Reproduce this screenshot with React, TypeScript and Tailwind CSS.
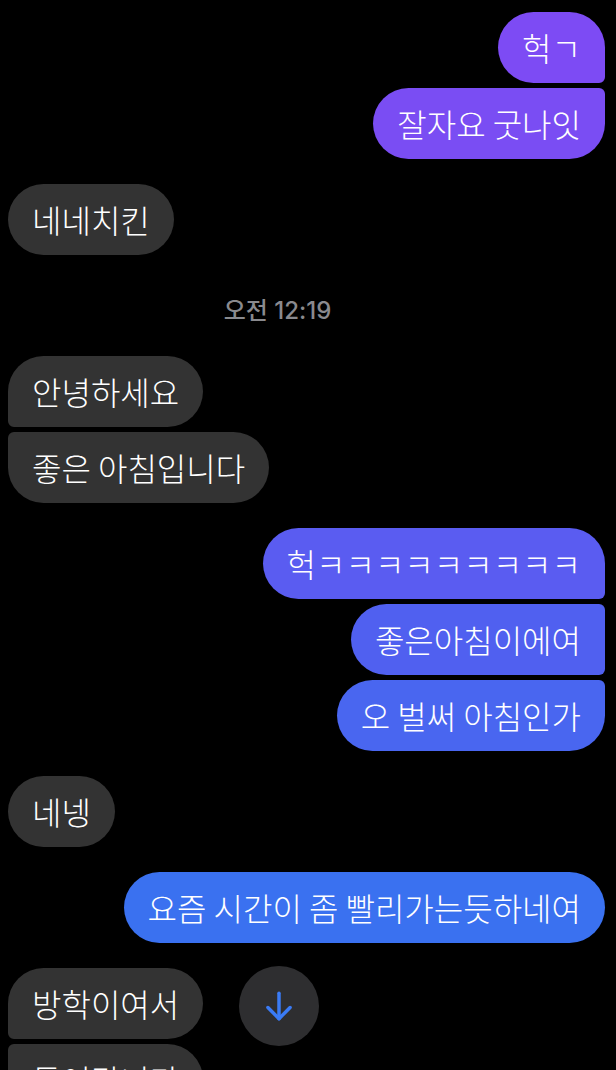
import React from 'react';

type Msg = {
    text: string;
    mine: boolean;
    shape: string;
    color?: string;
};

const font = { fontFamily: '"Noto Sans CJK KR", "Noto Sans", sans-serif' };

const Bubble = ({ text, mine, shape, color }: Msg) => (
    <div
        className={`h-[71px] flex items-center px-[24px] text-[32px] font-light text-white leading-none ${shape} ${mine ? color : 'bg-[#333333]'}`}
    >
        <span className="-mt-[2px]">{text}</span>
    </div>
);

const App = () => {
    return (
        <div className="w-[616px] h-[1070px] bg-black overflow-hidden pt-[12px]" style={font}>
            {/* first outgoing group */}
            <div className="flex flex-col items-end gap-[5px] pr-[11px]">
                <Bubble text="헉ㄱ" mine shape="rounded-[36px] rounded-br-[6px]" color="bg-[#7d4bf4]" />
                <Bubble text="잘자요 굿나잇" mine shape="rounded-[36px] rounded-tr-[6px]" color="bg-[#7a4df3]" />
            </div>

            <div className="flex flex-col items-start gap-[5px] pl-[8px] mt-[25px]">
                <Bubble text="네네치킨" mine={false} shape="rounded-[36px]" />
            </div>

            <div
                className="w-[555px] text-center mt-[44px] mb-[33px] text-[24px] font-medium text-[#8a8a8e] leading-none"
                style={{ fontFamily: 'Inter, "Noto Sans CJK KR", sans-serif' }}
            >
                오전 12:19
            </div>

            <div className="flex flex-col items-start gap-[5px] pl-[8px]">
                <Bubble text="안녕하세요" mine={false} shape="rounded-[36px] rounded-bl-[6px]" />
                <Bubble text="좋은 아침입니다" mine={false} shape="rounded-[36px] rounded-tl-[6px]" />
            </div>

            <div className="flex flex-col items-end gap-[5px] pr-[11px] mt-[25px]">
                <Bubble text="헉ㅋㅋㅋㅋㅋㅋㅋㅋㅋ" mine shape="rounded-[36px] rounded-br-[6px]" color="bg-[#5a5cf1]" />
                <Bubble text="좋은아침이에여" mine shape="rounded-[36px] rounded-r-[6px]" color="bg-[#5060f0]" />
                <Bubble text="오 벌써 아침인가" mine shape="rounded-[36px] rounded-tr-[6px]" color="bg-[#4966f0]" />
            </div>

            <div className="flex flex-col items-start gap-[5px] pl-[8px] mt-[25px]">
                <Bubble text="네넹" mine={false} shape="rounded-[36px]" />
            </div>

            <div className="flex flex-col items-end gap-[5px] pr-[11px] mt-[25px]">
                <Bubble text="요즘 시간이 좀 빨리가는듯하네여" mine shape="rounded-[36px]" color="bg-[#3a71f0]" />
            </div>

            <div className="flex items-start gap-[36px] pl-[8px] mt-[25px]">
                <div className="flex flex-col items-start gap-[5px]">
                    <Bubble text="방학이여서" mine={false} shape="rounded-[36px] rounded-bl-[6px]" />
                    <Bubble text="들어갑니다" mine={false} shape="rounded-[36px] rounded-tl-[6px]" />
                </div>
                <div className="relative">
                    <div className="absolute -top-[2px] left-0 w-[80px] h-[80px] rounded-full bg-[#2e2e30] flex items-center justify-center">
                        <svg width="38" height="38" viewBox="0 0 24 24" fill="none" stroke="#3a7bf5" strokeWidth="2.2" strokeLinecap="round" strokeLinejoin="round">
                            <path d="M12 4v16" />
                            <path d="M5 13l7 7 7-7" />
                        </svg>
                    </div>
                </div>
            </div>
        </div>
    );
};

export default App;
